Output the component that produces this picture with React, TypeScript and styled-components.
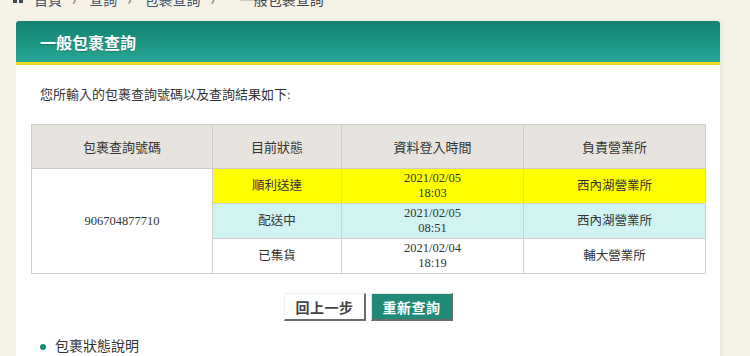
import React from 'react'
import styled, { createGlobalStyle } from 'styled-components'

const GlobalStyle = createGlobalStyle`
  html, body {
    margin: 0;
    padding: 0;
    background: #f6f2e8;
    overflow: hidden;
  }
  body {
    font-family: 'Liberation Serif', 'Noto Sans CJK TC', serif;
    color: #333;
  }
`

const rows = [
  { status: '順利送達', date: '2021/02/05', time: '18:03', office: '西內湖營業所', bg: '#ffff00' },
  { status: '配送中', date: '2021/02/05', time: '08:51', office: '西內湖營業所', bg: '#cff4f2' },
  { status: '已集貨', date: '2021/02/04', time: '18:19', office: '輔大營業所', bg: '#ffffff' },
]

export default function App() {
  return (
    <Root>
      <GlobalStyle />
      <Breadcrumb>
        <HomeIcon>
          <span />
          <span />
        </HomeIcon>
        <Crumb>首頁</Crumb>
        <Sep>›</Sep>
        <Crumb>查詢</Crumb>
        <Sep>›</Sep>
        <Crumb>包裹查詢</Crumb>
        <Sep>›</Sep>
        <Crumb $current>一般包裹查詢</Crumb>
      </Breadcrumb>
      <Panel>
        <PanelHeader>一般包裹查詢</PanelHeader>
        <PanelBody>
          <Intro>您所輸入的包裹查詢號碼以及查詢結果如下:</Intro>
          <ResultTable>
            <colgroup>
              <col style={{ width: 181 }} />
              <col style={{ width: 129 }} />
              <col style={{ width: 182 }} />
              <col />
            </colgroup>
            <thead>
              <tr>
                <Th>包裹查詢號碼</Th>
                <Th>目前狀態</Th>
                <Th>資料登入時間</Th>
                <Th>負責營業所</Th>
              </tr>
            </thead>
            <tbody>
              {rows.map((r, i) => (
                <tr key={i}>
                  {i === 0 && (
                    <Td rowSpan={3} $bg="#ffffff">
                      906704877710
                    </Td>
                  )}
                  <Td $bg={r.bg}>{r.status}</Td>
                  <Td $bg={r.bg}>
                    {r.date}
                    <br />
                    {r.time}
                  </Td>
                  <Td $bg={r.bg}>{r.office}</Td>
                </tr>
              ))}
            </tbody>
          </ResultTable>
          <Actions>
            <Button>回上一步</Button>
            <Button $primary>重新查詢</Button>
          </Actions>
          <InfoList>
            <li>包裹狀態說明</li>
          </InfoList>
        </PanelBody>
      </Panel>
    </Root>
  )
}

const Root = styled.div`
  width: 750px;
  height: 356px;
  overflow: hidden;
`

const Breadcrumb = styled.div`
  display: flex;
  align-items: center;
  height: 20px;
  margin-top: -11px;
  padding-left: 13px;
  font-family: 'Noto Sans CJK TC', sans-serif;
  font-size: 14px;
  line-height: 20px;
  color: #3d5466;
`

const HomeIcon = styled.div`
  display: flex;
  gap: 2px;
  margin-right: 11px;
  span {
    width: 4px;
    height: 4px;
    background: #3d4a55;
    margin-top: 4px;
  }
`

const Crumb = styled.span<{ $current?: boolean }>`
  color: ${(p) => (p.$current ? '#444' : '#3d5466')};
  margin-left: ${(p) => (p.$current ? '12px' : '0')};
`

const Sep = styled.span`
  margin: 0 13px 0 10px;
  color: #666;
`

const Panel = styled.div`
  margin: 12px 0 0 16px;
  width: 704px;
  background: #fff;
  box-shadow: 2px 0 4px rgba(0, 0, 0, 0.06);
  border-radius: 3px 3px 0 0;
`

const PanelHeader = styled.div`
  height: 41px;
  display: flex;
  align-items: center;
  padding-left: 24px;
  border-radius: 3px 3px 0 0;
  background: linear-gradient(to bottom, #158071 0%, #1e9684 55%, #25a794 100%);
  border-bottom: 3px solid #ecd81c;
  font-family: 'Noto Sans CJK TC', sans-serif;
  font-weight: 700;
  font-size: 16px;
  color: #fff;
  text-shadow: 0 1px 1px rgba(0, 0, 0, 0.2);
`

const PanelBody = styled.div`
  padding: 20px 14px 20px 15px;
`

const Intro = styled.p`
  margin: 0 0 0 9px;
  font-size: 13px;
  line-height: 20px;
  color: #333;
`

const ResultTable = styled.table`
  margin-top: 19px;
  width: 675px;
  border-collapse: collapse;
  table-layout: fixed;
  border: 1px solid #c9c9c9;
  font-size: 12.5px;
`

const Th = styled.th`
  height: 43px;
  padding: 0;
  background: #e7e3de;
  border: 1px solid #cfcbc6;
  font-weight: 400;
  color: #333;
  font-size: 13px;
  text-align: center;
`

const Td = styled.td<{ $bg: string }>`
  height: 34px;
  padding: 0;
  background: ${(p) => p.$bg};
  border: 1px solid #d0d0d0;
  text-align: center;
  line-height: 15px;
  color: #333;
`

const Actions = styled.div`
  display: flex;
  justify-content: center;
  gap: 5px;
  margin-top: 19px;
`

const Button = styled.button<{ $primary?: boolean }>`
  width: 82px;
  height: 28px;
  padding: 0;
  font-family: 'Noto Sans CJK TC', sans-serif;
  font-size: 14px;
  font-weight: 700;
  letter-spacing: 0.5px;
  cursor: pointer;
  color: ${(p) => (p.$primary ? '#fff' : '#444')};
  background: ${(p) => (p.$primary ? '#1e8a77' : '#fff')};
  border-top: 1px solid ${(p) => (p.$primary ? '#e4e4e4' : '#efefef')};
  border-left: 1px solid ${(p) => (p.$primary ? '#e4e4e4' : '#efefef')};
  border-right: 2px solid #6b6b6b;
  border-bottom: 2px solid #6b6b6b;
`

const InfoList = styled.ul`
  margin: 16px 0 0 0;
  padding-left: 9px;
  list-style: none;
  li {
    position: relative;
    padding-left: 15px;
    font-size: 14px;
    line-height: 20px;
    color: #333;
  }
  li::before {
    content: '';
    position: absolute;
    left: 0;
    top: 7px;
    width: 6px;
    height: 6px;
    border-radius: 50%;
    background: #1e8a77;
  }
`
